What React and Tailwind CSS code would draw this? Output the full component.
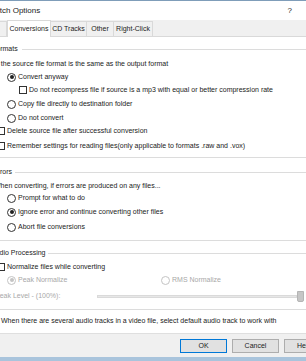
import React from 'react';

const Radio = ({ checked, disabled }) => (
  <span
    className={`inline-flex items-center justify-center w-[9px] h-[9px] rounded-full border bg-white shrink-0 ${disabled ? 'border-[#c4c4c4]' : 'border-[#333]'}`}
  >
    {checked && <span className={`w-[4px] h-[4px] rounded-full ${disabled ? 'bg-[#c4c4c4]' : 'bg-[#222]'}`} />}
  </span>
);

const Check = () => <span className="inline-block w-[8px] h-[8px] border border-[#333] bg-white shrink-0" />;

const Row = ({ className = '', children }) => (
  <div className={`h-[12px] flex items-center whitespace-nowrap ${className}`}>{children}</div>
);

const GroupLabel = ({ text, shift, gap }) => (
  <Row>
    <span className={shift}>{text}</span>
    <span className={`flex-1 h-px bg-[#dcdcdc] ${gap}`} />
  </Row>
);

const Line = ({ className = '' }) => <div className={`h-px bg-[#dcdcdc] ${className}`} />;

export default function App() {
  return (
    <div
      className="w-[306px] h-[361px] overflow-hidden bg-white text-[7px] text-[#222] flex flex-col"
      style={{ fontFamily: '"Liberation Sans", Arial, sans-serif' }}
    >
      {/* title bar */}
      <div className="h-[20px] shrink-0 border-t border-[#7f9db9] flex items-center justify-between pr-[14px]">
        <span className="text-[8px] ml-[-10px] whitespace-nowrap">Batch Options</span>
        <span className="text-[8px]">?</span>
      </div>

      {/* tabs */}
      <div className="h-[17px] shrink-0 bg-[#f0f0f0] flex items-end border-b border-[#d9d9d9] whitespace-nowrap">
        <div className="w-[7px] h-[15px] border-r border-t border-[#d9d9d9]" />
        <div className="w-[44px] h-[17px] bg-white border-x border-t border-[#d9d9d9] mb-[-1px] flex items-center justify-center pt-[1px]">Conversions</div>
        <div className="w-[36px] h-[15px] border-r border-t border-[#d9d9d9] flex items-center justify-center pt-[1px]">CD Tracks</div>
        <div className="w-[27px] h-[15px] border-r border-t border-[#d9d9d9] flex items-center justify-center pt-[1px]">Other</div>
        <div className="w-[39px] h-[15px] border-r border-t border-[#d9d9d9] flex items-center justify-center pt-[1px]">Right-Click</div>
      </div>

      {/* tab page */}
      <div className="h-[296px] shrink-0 flex flex-col">
        <div className="mt-[6px]">
          <GroupLabel text="Formats" shift="ml-[-8px]" gap="ml-[4px]" />
        </div>
        <Row className="mt-[3px]"><span className="ml-[-5px]">If the source file format is the same as the output format</span></Row>
        <Row className="mt-[1px] pl-[7px] gap-[2px]"><Radio checked /><span>Convert anyway</span></Row>
        <Row className="mt-[1px] pl-[19px] gap-[2px]"><Check /><span>Do not recompress file if source is a mp3 with equal or better compression rate</span></Row>
        <Row className="mt-[2px] pl-[7px] gap-[2px]"><Radio /><span>Copy file directly to destination folder</span></Row>
        <Row className="mt-[2px] pl-[7px] gap-[2px]"><Radio /><span>Do not convert</span></Row>
        <Row className="mt-[1px] ml-[-3px] gap-[2px]"><Check /><span>Delete source file after successful conversion</span></Row>
        <Row className="mt-[3px] ml-[-3px] gap-[2px]"><Check /><span>Remember settings for reading files(only applicable to formats .raw and .vox)</span></Row>
        <Line className="mt-[5px]" />

        <div className="mt-[8px]">
          <GroupLabel text="Errors" shift="ml-[-7px]" gap="ml-[3px]" />
        </div>
        <Row className="mt-[2px]"><span className="ml-[-6px]">When converting, if errors are produced on any files...</span></Row>
        <Row className="pl-[7px] gap-[2px]"><Radio /><span>Prompt for what to do</span></Row>
        <Row className="mt-[2px] pl-[7px] gap-[2px]"><Radio checked /><span>Ignore error and continue converting other files</span></Row>
        <Row className="mt-[3px] pl-[7px] gap-[2px]"><Radio /><span>Abort file conversions</span></Row>
        <Line className="mt-[7px]" />

        <div className="mt-[6px]">
          <GroupLabel text="Audio Processing" shift="ml-[-9px]" gap="ml-[3px]" />
        </div>
        <Row className="mt-[2px] ml-[-3px] gap-[2px]"><Check /><span>Normalize files while converting</span></Row>
        <Row className="mt-[1px] pl-[7px] text-[#a8a8a8]">
          <span className="w-[154px] flex items-center gap-[2px]"><Radio checked disabled /><span>Peak Normalize</span></span>
          <span className="flex items-center gap-[2px]"><Radio disabled /><span>RMS Normalize</span></span>
        </Row>
        <Row className="mt-[4px] text-[#a8a8a8]">
          <span className="ml-[-5px] w-[102px]">Peak Level - (100%):</span>
          <span className="flex-1 flex items-center mr-[2px]">
            <span className="flex-1 h-[3px] bg-[#e7e7e7] border border-[#dadada]" />
            <span className="w-[7px] h-[11px] bg-[#c6c6c6] border border-[#b5b5b5] rounded-b-[2px]" />
          </span>
        </Row>
        <Line className="mt-[7px]" />
        <Row className="mt-[5px]"><span className="ml-[1px]">When there are several audio tracks in a video file, select default audio track to work with</span></Row>
      </div>

      {/* button bar */}
      <div className="flex-1 bg-[#f0f0f0] border-t border-[#dfdfdf] flex flex-col">
        <div className="flex gap-[5px] pl-[180px] mt-[5px] whitespace-nowrap">
          <button className="w-[47px] h-[14px] shrink-0 bg-[#e1e1e1] border border-[#0078d7] text-[7px]">OK</button>
          <button className="w-[47px] h-[14px] shrink-0 bg-[#e1e1e1] border border-[#adadad] text-[7px]">Cancel</button>
          <button className="w-[47px] h-[14px] shrink-0 bg-[#e1e1e1] border border-[#adadad] text-[7px] text-left pl-[12px]">Help</button>
        </div>
        <div className="mt-auto h-[4px] bg-[#a9c4dc]" />
      </div>
    </div>
  );
}
